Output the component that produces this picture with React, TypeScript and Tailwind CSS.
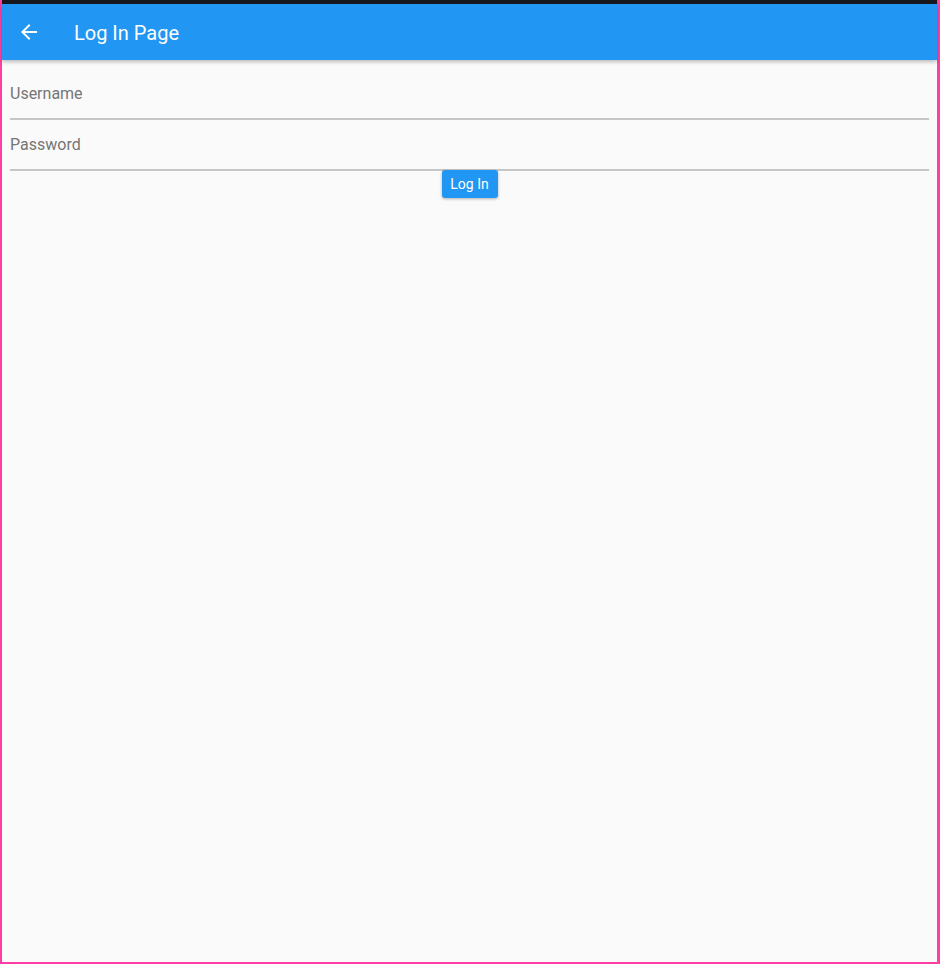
import React from 'react';

const BackArrow = () => (
  <svg width="24" height="24" viewBox="0 0 24 24" fill="white">
    <path d="M20 11H7.83l5.59-5.59L12 4l-8 8 8 8 1.41-1.41L7.83 13H20v-2z" />
  </svg>
);

const Field = ({ label }: { label: string }) => (
  <div className="pt-[13px] pb-3 border-b-2 border-[#c6c6c6]">
    <p className="text-base leading-6 text-[#757575]">{label}</p>
  </div>
);

const App = () => {
  return (
    <div
      className="h-[964px] w-[940px] flex flex-col border-l-2 border-r-[3px] border-b-2 border-[#ff3fa3] bg-[#fafafa]"
      style={{ fontFamily: 'Roboto, "Noto Sans", sans-serif' }}
    >
      <div className="h-1 bg-[#16181d]" />
      <div className="relative z-10 h-14 flex items-center bg-[#2196f3] shadow-[0_2px_4px_rgba(0,0,0,0.25)]">
        <div className="w-[54px] flex justify-center">
          <BackArrow />
        </div>
        <h1 className="ml-[18px] pt-0.5 text-xl font-normal text-white">Log In Page</h1>
      </div>
      <div className="flex-1 flex flex-col px-2 pt-[9px]">
        <Field label="Username" />
        <Field label="Password" />
        <div className="flex justify-center -mt-px">
          <button className="h-7 w-14 rounded-[3px] bg-[#2196f3] text-sm font-normal text-white shadow-[0_1px_3px_rgba(0,0,0,0.3)]">
            Log In
          </button>
        </div>
      </div>
    </div>
  );
};

export default App;
